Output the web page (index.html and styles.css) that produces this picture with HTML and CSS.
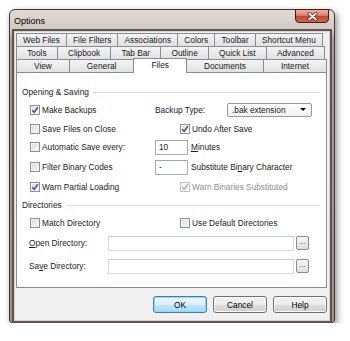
FILE: index.html
```html
<!DOCTYPE html>
<html lang="en">
<head>
    <meta charset="UTF-8">
    <title>Options</title>
    <link rel="stylesheet" href="styles.css">
</head>
<body>
    <div class="window">
        <div class="titlebar">
            <span class="title">Options</span>
            <div class="close">
                <svg width="11" height="9" viewBox="0 0 11 9">
                    <path d="M2 1.5 L9 7.5 M9 1.5 L2 7.5" stroke="#5a1c12" stroke-width="3.2" stroke-linecap="round"/>
                    <path d="M2 1.5 L9 7.5 M9 1.5 L2 7.5" stroke="#fff" stroke-width="1.7" stroke-linecap="round"/>
                </svg>
            </div>
        </div>

        <div class="client">
            <div class="tabrow r1">
                <div class="tab">Web Files</div>
                <div class="tab">File Filters</div>
                <div class="tab">Associations</div>
                <div class="tab">Colors</div>
                <div class="tab">Toolbar</div>
                <div class="tab">Shortcut Menu</div>
            </div>
            <div class="tabrow r2">
                <div class="tab">Tools</div>
                <div class="tab">Clipbook</div>
                <div class="tab">Tab Bar</div>
                <div class="tab">Outline</div>
                <div class="tab">Quick List</div>
                <div class="tab">Advanced</div>
            </div>
            <div class="tabrow r3">
                <div class="tab">View</div>
                <div class="tab">General</div>
                <div class="tab active">Files</div>
                <div class="tab">Documents</div>
                <div class="tab">Internet</div>
            </div>

            <div class="panel">
                <div class="group-head">Opening &amp; Saving</div>
                <div class="opts">
                    <label class="check"><span class="box on"><svg width="8" height="8" viewBox="0 0 8 8"><path d="M1.2 4.2 L3.2 6.3 L6.9 1.3" fill="none" stroke="#3d5692" stroke-width="1.5"/></svg></span>Make Backups</label>
                    <div class="field"><span class="lbl">Backup Type:</span><div class="select">.bak extension<span class="arrow"></span></div></div>

                    <label class="check"><span class="box"></span>Save Files on Close</label>
                    <label class="check indent"><span class="box on"><svg width="8" height="8" viewBox="0 0 8 8"><path d="M1.2 4.2 L3.2 6.3 L6.9 1.3" fill="none" stroke="#3d5692" stroke-width="1.5"/></svg></span>Undo After Save</label>

                    <label class="check"><span class="box"></span>Automatic Save every:</label>
                    <div class="field"><div class="text">10</div><span><u>M</u>inutes</span></div>

                    <label class="check"><span class="box"></span>Filter Binary Codes</label>
                    <div class="field"><div class="text">-</div><span>Substitute Bi<u>n</u>ary Character</span></div>

                    <label class="check"><span class="box on"><svg width="8" height="8" viewBox="0 0 8 8"><path d="M1.2 4.2 L3.2 6.3 L6.9 1.3" fill="none" stroke="#3d5692" stroke-width="1.5"/></svg></span>Warn Partial Loading</label>
                    <label class="check indent disabled"><span class="box"><svg width="8" height="8" viewBox="0 0 8 8"><path d="M1.2 4.2 L3.2 6.3 L6.9 1.3" fill="none" stroke="#b4b4b4" stroke-width="1.5"/></svg></span>Warn Binaries Substituted</label>
                </div>

                <div class="group-head dirs">Directories</div>
                <div class="opts dir-opts">
                    <label class="check"><span class="box"></span>Match Directory</label>
                    <label class="check indent"><span class="box"></span>Use Default Directories</label>
                </div>
                <div class="dir-row open">
                    <span class="lbl"><u>O</u>pen Directory:</span>
                    <div class="text"></div>
                    <div class="browse">...</div>
                </div>
                <div class="dir-row save">
                    <span class="lbl">Sa<u>v</u>e Directory:</span>
                    <div class="text"></div>
                    <div class="browse">...</div>
                </div>
            </div>

            <div class="actions">
                <button class="btn default">OK</button>
                <button class="btn">Cancel</button>
                <button class="btn">Help</button>
            </div>
        </div>
    </div>
</body>
</html>
```

FILE: styles.css
```css
/* Win7 style options dialog */
body {
    margin: 0;
    padding: 9px 0 0 9px;
    background-color: #fff;
    font-family: "Liberation Sans", Arial, sans-serif;
    font-size: 8.3px;
    color: #1a1a1a;
}

.window {
    width: 326px;
    height: 314px;
    box-sizing: border-box;
    border: 1px solid #3e3733;
    border-radius: 6px 6px 3px 3px;
    background: linear-gradient(#e2dcd6, #d2c9c1 20px, #a89d94 30px, #9c9189);
    box-shadow: 2px 3px 7px rgba(0, 0, 0, 0.45);
    display: flex;
    flex-direction: column;
}

.titlebar {
    height: 22px;
    display: flex;
    align-items: flex-start;
    padding: 0 5px 0 4px;
}

.title {
    flex: 1;
    font-size: 9px;
    line-height: 10px;
    margin-top: 6px;
    color: #000;
}

.close {
    width: 34px;
    height: 14px;
    margin-top: -1px;
    box-sizing: border-box;
    border: 1px solid #4a1a12;
    border-radius: 0 0 4px 4px;
    background: linear-gradient(#eab1a2, #d9806c 45%, #c3442d 50%, #cf6a4f);
    display: flex;
    justify-content: center;
    align-items: center;
}

.client {
    margin: 0 5px;
    height: 288px;
    box-sizing: border-box;
    background-color: #f0f0f0;
    padding: 1px 2px 0 1px;
    box-shadow: 0 0 0 1px #d8d2cc, 0 0 0 3px #5e554f;
}

.tabrow {
    display: flex;
    height: 13px;
}

.tabrow.r1 {
    margin-right: 4px;
}

.tabrow.r2 {
    margin-right: 2px;
}

.tab {
    flex: 1 1 auto;
    height: 13px;
    box-sizing: border-box;
    border: 1px solid #898c95;
    border-bottom: none;
    margin-left: -1px;
    padding: 0 3px;
    background: linear-gradient(#f4f4f4, #e1e1e1);
    text-align: center;
    line-height: 12px;
    white-space: nowrap;
}

.tab:first-child {
    margin-left: 0;
}

.tab.active {
    position: relative;
    z-index: 1;
    height: 15px;
    margin-top: -1px;
    margin-bottom: -1px;
    background: #fff;
    line-height: 13px;
}

.panel {
    height: 216px;
    box-sizing: border-box;
    border: 1px solid #898c95;
    background-color: #fff;
    padding: 14px 6px 0 5px;
}

.group-head {
    display: flex;
    align-items: center;
    height: 10px;
    line-height: 10px;
}

.group-head::after {
    content: "";
    flex: 1;
    height: 1px;
    margin-left: 4px;
    background-color: #d5dfe5;
}

.group-head.dirs {
    margin-top: 4px;
}

.opts {
    display: grid;
    grid-template-columns: 125px 1fr;
    grid-template-rows: 18px 19px 18px 22px 18px;
    align-items: center;
    margin-top: 4px;
    padding-left: 8px;
}

.dir-opts {
    grid-template-rows: 18px;
}

.check {
    display: flex;
    align-items: center;
    gap: 2px;
    white-space: nowrap;
}

.indent {
    padding-left: 25px;
}

.disabled {
    color: #8d8d8d;
}

.box {
    width: 10px;
    height: 10px;
    box-sizing: border-box;
    border: 1px solid #8e8f8f;
    background: linear-gradient(135deg, #d9d9d9, #fbfbfb);
    box-shadow: inset 0 0 0 1px #f4f4f4;
    display: flex;
    justify-content: center;
    align-items: center;
}

.disabled .box {
    border-color: #c2c2c2;
    background: #f4f4f4;
}

.field {
    display: flex;
    align-items: center;
    white-space: nowrap;
}

.field .lbl {
    width: 72px;
}

.select {
    position: relative;
    width: 85px;
    height: 14px;
    box-sizing: border-box;
    border: 1px solid #9a9a9a;
    border-radius: 2px;
    background: linear-gradient(#fdfdfd, #f1f1f1);
    padding-left: 4px;
    line-height: 12px;
}

.arrow {
    position: absolute;
    right: 5px;
    top: 4px;
    border-left: 3px solid transparent;
    border-right: 3px solid transparent;
    border-top: 3px solid #000;
}

.text {
    width: 33px;
    height: 15px;
    box-sizing: border-box;
    border: 1px solid #abadb3;
    border-top-color: #a3a6ad;
    background-color: #fff;
    padding-left: 3px;
    line-height: 13px;
    margin-right: 3px;
}

.dir-row {
    display: flex;
    align-items: center;
    height: 18px;
    padding: 0 11px 0 7px;
}

.dir-row.open {
    margin-top: 2px;
}

.dir-row.save {
    margin-top: 5px;
}

.dir-row .lbl {
    width: 79px;
}

.dir-row .text {
    flex: 1;
    margin-right: 2px;
    border-color: #d5dbe1;
    border-top-color: #c8ced5;
}

.browse {
    width: 13px;
    height: 14px;
    box-sizing: border-box;
    border: 1px solid #8c8c8c;
    border-radius: 2px;
    background: linear-gradient(#f6f6f6, #dedede);
    font-size: 7px;
    line-height: 9px;
    text-align: center;
    color: #333;
}

.actions {
    display: flex;
    justify-content: flex-end;
    gap: 6px;
    margin-top: 8px;
}

.btn {
    width: 54px;
    height: 17px;
    box-sizing: border-box;
    padding: 0;
    border: 1px solid #707070;
    border-radius: 3px;
    background: linear-gradient(#f2f2f2 0, #ebebeb 50%, #dddddd 50%, #cfcfcf 100%);
    box-shadow: inset 0 0 0 1px #fbfbfb;
    font-family: inherit;
    font-size: 8.3px;
    color: #000;
}

.btn.default {
    border-color: #3c7fb1;
    background: linear-gradient(#eaf6fd 0, #d9f0fc 50%, #bee6fd 50%, #a7d9f5 100%);
    box-shadow: inset 0 0 0 1px #9fd3f3;
}
```
